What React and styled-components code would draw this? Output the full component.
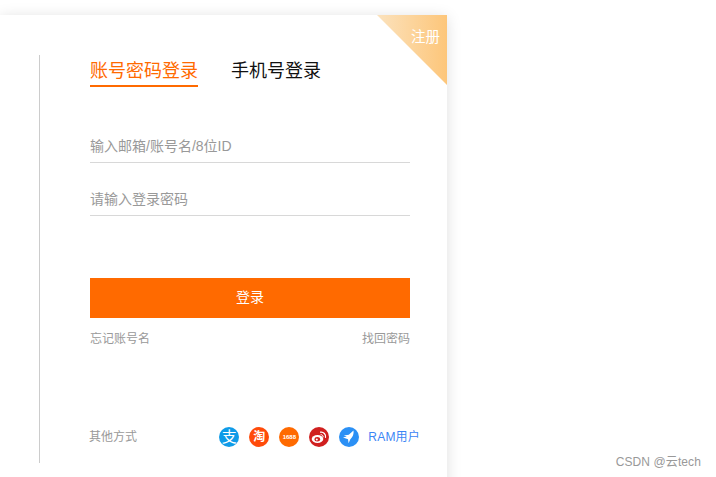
import React from 'react';
import styled, { createGlobalStyle } from 'styled-components';

const GlobalStyle = createGlobalStyle`
html, body {
    margin: 0;
    padding: 0;
    height: 100%;
    overflow: hidden;
    background: #fff;
    font-family: "Liberation Sans", "Noto Sans CJK SC", sans-serif;
}
`;

const App = () => {
    return (
        <Page>
            <GlobalStyle />
            <Card>
                <Corner><span>注册</span></Corner>
                <Content>
                    <Tabs>
                        <Tab active>账号密码登录</Tab>
                        <Tab>手机号登录</Tab>
                    </Tabs>

                    <Field>输入邮箱/账号名/8位ID</Field>
                    <Field>请输入登录密码</Field>

                    <LoginBtn>登录</LoginBtn>

                    <Links>
                        <span>忘记账号名</span>
                        <span>找回密码</span>
                    </Links>

                    <Others>
                        <OtherLabel>其他方式</OtherLabel>
                        <Icons>
                            <Round color="#0f9be8"><AliGlyph>支</AliGlyph></Round>
                            <Round color="#ff4b0a"><TaoGlyph>淘</TaoGlyph></Round>
                            <Round color="#ff6a00"><SmallGlyph>1688</SmallGlyph></Round>
                            <Round color="#d0201f">
                                <svg width="16" height="14" viewBox="0 0 16 14">
                                    <ellipse cx="6.5" cy="9" rx="5.8" ry="4" fill="#fff" />
                                    <ellipse cx="6.3" cy="9.2" rx="2.8" ry="2.2" fill="#d0201f" />
                                    <circle cx="5.8" cy="9.6" r="1" fill="#fff" />
                                    <path d="M9.5 2.2a4.4 4.4 0 0 1 5 5.2" fill="none" stroke="#fff" strokeWidth="1.2" strokeLinecap="round" />
                                    <path d="M10 4.6a2 2 0 0 1 2.2 2.4" fill="none" stroke="#fff" strokeWidth="1" strokeLinecap="round" />
                                </svg>
                            </Round>
                            <Round color="#2b90f5">
                                <svg width="14" height="14" viewBox="0 0 14 14">
                                    <path d="M11.5 .5C11.8 3 11.4 5.4 10 7.2L8.2 9.4 6.6 13.2 6 9.2 1 7.6 4.8 6.6 1.8 5.6 6.8 4.8z" fill="#fff" />
                                </svg>
                            </Round>
                        </Icons>
                        <RamLink>RAM用户</RamLink>
                    </Others>
                </Content>
            </Card>
            <Watermark>CSDN @云tech</Watermark>
        </Page>
    );
};

export default App;


const Page = styled.div`
position: relative;
width: 716px;
height: 477px;
padding-top: 15px;
box-sizing: border-box;
overflow: hidden;
`;

const Card = styled.div`
position: relative;
width: 447px;
height: 480px;
padding: 40px 0 0 39px;
box-sizing: border-box;
background: #fff;
box-shadow: 0px 2px 14px rgba(0, 0, 0, 0.13);
`;

const Corner = styled.div`
position: absolute;
top: 0px;
right: 0px;
width: 70px;
height: 70px;
background: linear-gradient(90deg, #fbe2bd 0%, #fdc67a 100%);
clip-path: polygon(0 0, 100% 0, 100% 100%);

span {
    position: absolute;
    top: 14px;
    right: 7px;
    font-size: 14.5px;
    line-height: 16px;
    color: #fff;
}
`;

const Content = styled.div`
width: 320px;
height: 408px;
padding-left: 50px;
border-left: 1px solid #ccc;
`;

const Tabs = styled.div`
display: flex;
gap: 33px;
height: 32px;
`;

const Tab = styled.div`
height: 32px;
box-sizing: border-box;
font-size: 18px;
line-height: 32px;
color: ${props => props.active ? '#ff6a00' : '#111'};
border-bottom: ${props => props.active ? '2px solid #ff6a00' : 'none'};
`;

const Field = styled.div`
height: 34px;
padding-top: 2px;
margin-top: 16px;
border-bottom: 1px solid #d8d8d8;
font-size: 14px;
line-height: 36px;
color: #999;

${Tabs} + & {
    margin-top: 39px;
}
`;

const LoginBtn = styled.div`
height: 40px;
margin-top: 62px;
background: #ff6a00;
color: #fff;
font-size: 14px;
line-height: 39px;
text-align: center;
`;

const Links = styled.div`
display: flex;
justify-content: space-between;
margin-top: 13px;
font-size: 12px;
line-height: 16px;
color: #999;
`;

const Others = styled.div`
display: flex;
align-items: center;
width: 330px;
margin-top: 80px;
`;

const OtherLabel = styled.div`
flex: 1;
margin-left: -1px;
font-size: 12px;
line-height: 20px;
color: #999;
`;

const Icons = styled.div`
display: flex;
gap: 10px;
`;

const Round = styled.div`
display: flex;
align-items: center;
justify-content: center;
width: 20px;
height: 20px;
border-radius: 50%;
background: ${props => props.color};
overflow: hidden;
`;

const AliGlyph = styled.span`
font-size: 15px;
line-height: 20px;
color: #fff;
`;

const TaoGlyph = styled.span`
font-size: 12px;
line-height: 20px;
font-weight: 700;
color: #fff;
`;

const SmallGlyph = styled.span`
font-size: 6px;
line-height: 20px;
font-weight: 700;
color: #fff;
`;

const RamLink = styled.div`
margin-left: 9px;
font-size: 12px;
line-height: 20px;
letter-spacing: 0.2px;
color: #3b86f5;
`;

const Watermark = styled.div`
position: absolute;
right: 15px;
bottom: 7px;
font-size: 12px;
line-height: 16px;
letter-spacing: 0.1px;
color: #999;
`;
